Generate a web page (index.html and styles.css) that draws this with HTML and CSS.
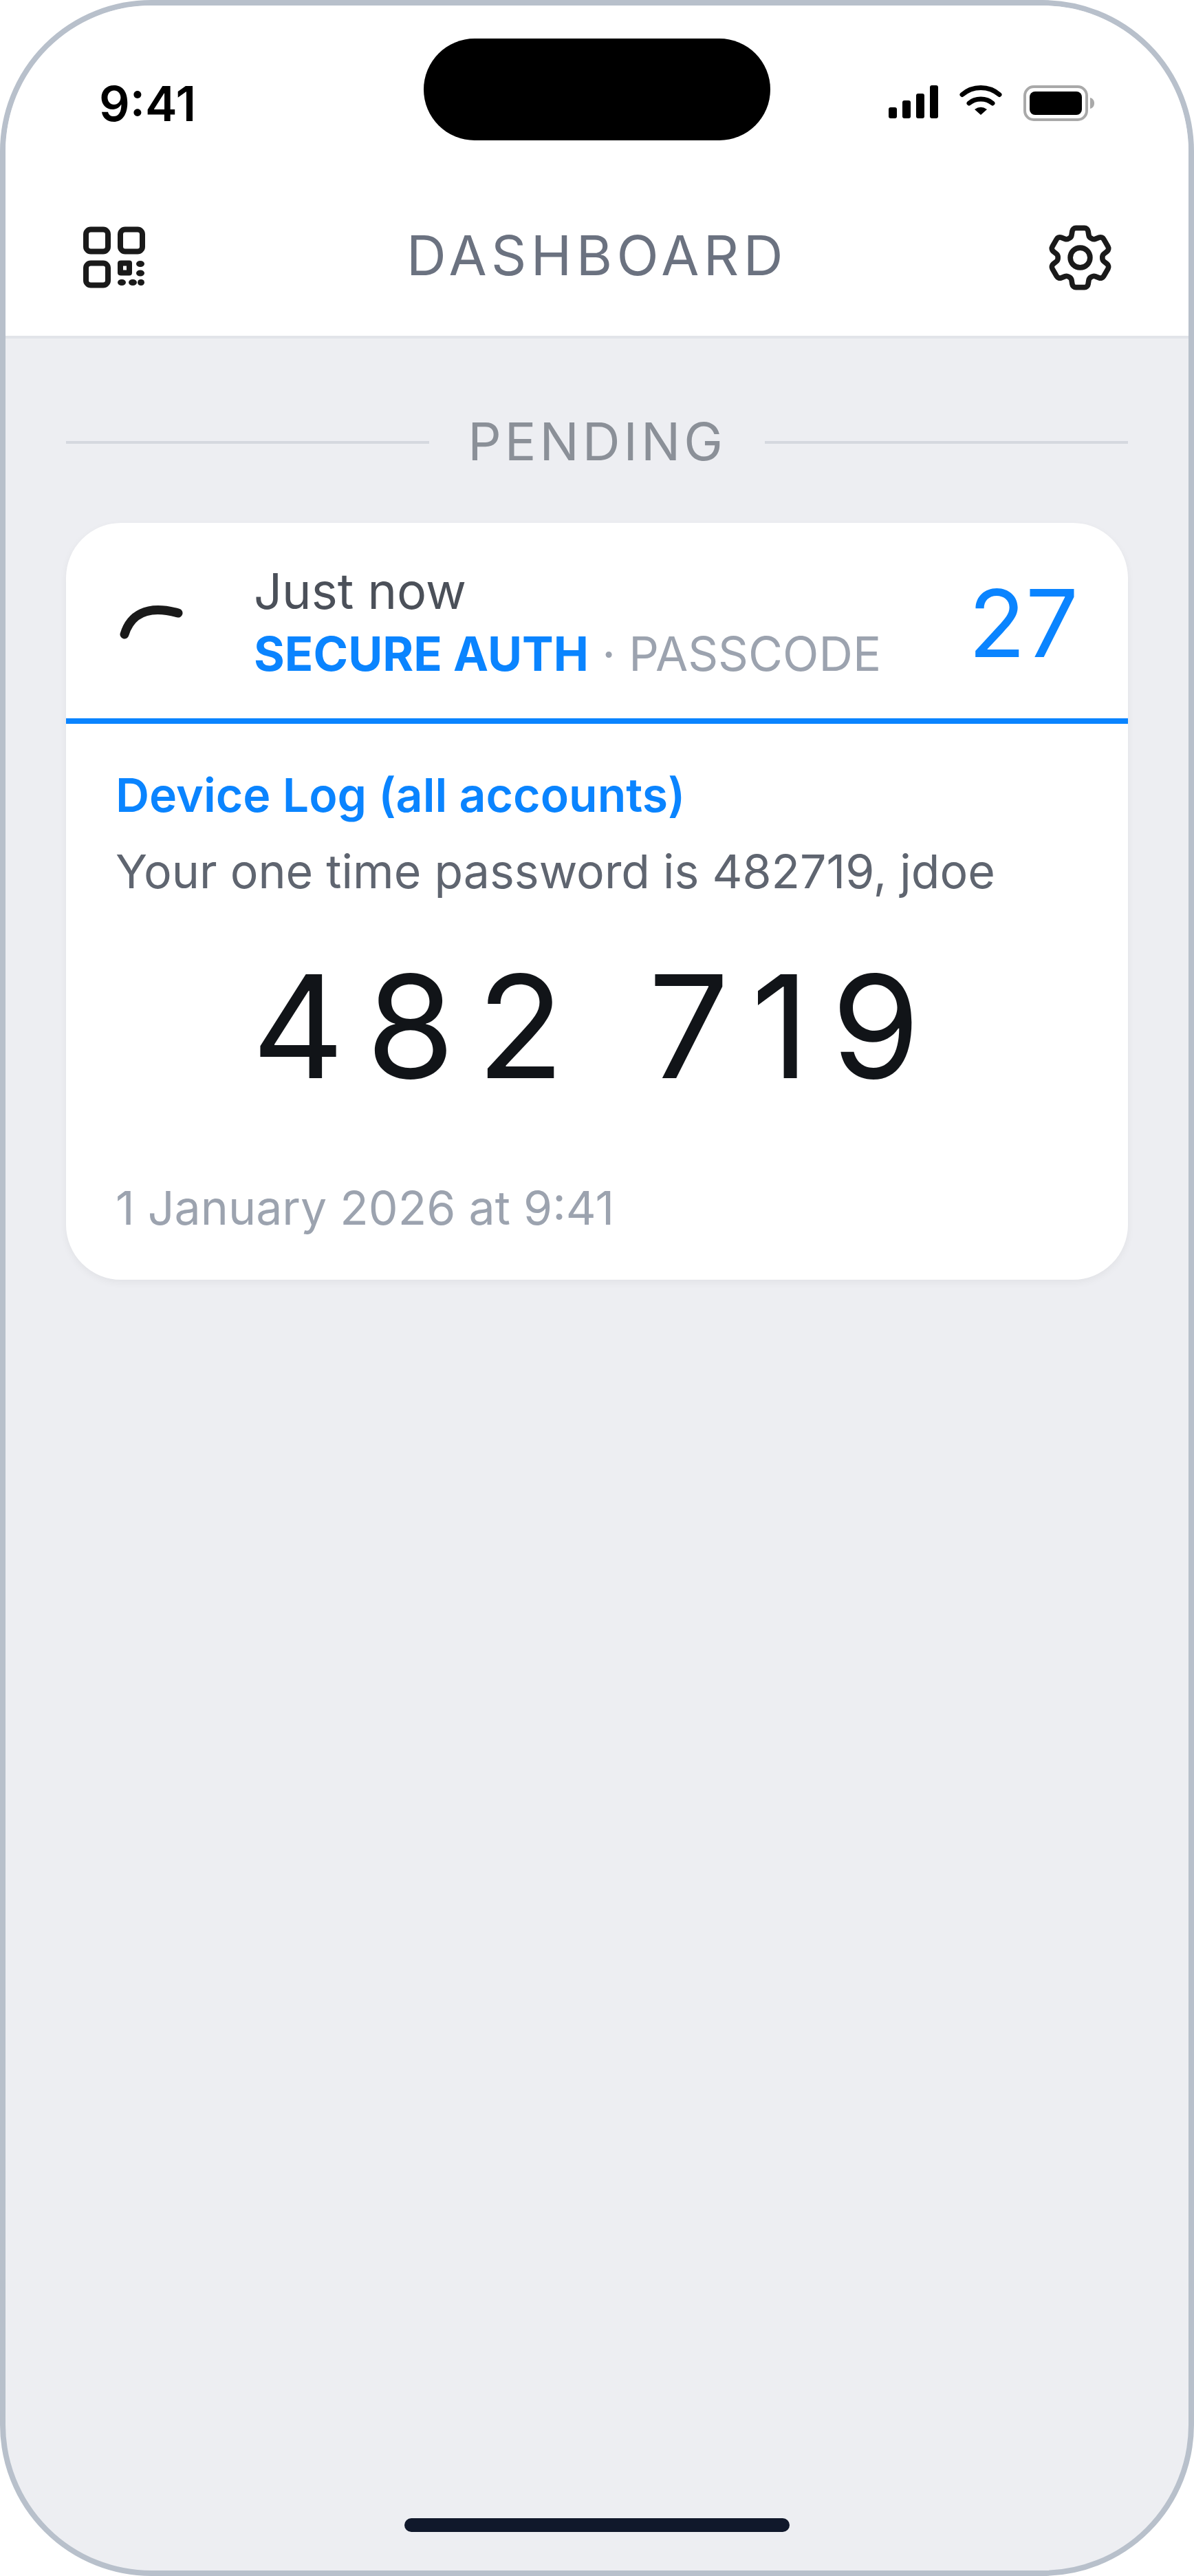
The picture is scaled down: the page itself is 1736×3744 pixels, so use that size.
FILE: index.html
```html
<!DOCTYPE html>
<html lang="en">
<head>
  <meta charset="UTF-8" />
  <title>Dashboard</title>
  <link rel="stylesheet" href="styles.css">
</head>
<body>
  <div class="phone">
    <header class="top">
      <div class="status-bar">
        <span class="clock">9:41</span>
        <div class="island"></div>
        <div class="status-icons">
          <svg class="signal" width="72" height="48" viewBox="0 0 72 48" fill="#000">
            <rect x="0" y="32" width="12" height="16" rx="3"/>
            <rect x="20" y="22" width="12" height="26" rx="3"/>
            <rect x="40" y="12" width="12" height="36" rx="3"/>
            <rect x="60" y="0" width="12" height="48" rx="3"/>
          </svg>
          <svg class="wifi" width="62" height="44" viewBox="0 0 62 44" fill="none" stroke="#000" stroke-width="7" stroke-linecap="round">
            <path d="M4 14.5C19 1 43 1 58 14.5"/>
            <path d="M14 27C23 19 39 19 48 27"/>
            <path d="M22 36Q31 29.500 40 36L31 44Z" fill="#000" stroke="none"/>
          </svg>
          <svg class="battery" width="104" height="52" viewBox="0 0 104 52">
            <rect x="2" y="2" width="90" height="48" rx="13" fill="none" stroke="#a9a9a9" stroke-width="4"/>
            <rect x="9" y="9" width="76" height="34" rx="8" fill="#000"/>
            <path d="M97 18C101 19 103 22 103 26C103 30 101 33 97 34Z" fill="#a9a9a9"/>
          </svg>
        </div>
      </div>
      <nav class="nav">
        <svg class="nav-icon" viewBox="-13 -12.500 115 115" fill="#1a1a1a">
          <g fill="none" stroke="#1a1a1a" stroke-width="8">
            <rect x="4" y="4" width="32" height="32" rx="7"/>
            <rect x="54" y="4" width="32" height="32" rx="7"/>
            <rect x="4" y="53" width="32" height="32" rx="7"/>
          </g>
          <path fill-rule="evenodd" d="M55 49H67Q71 49 71 53V67Q71 71 67 71H55Q50 71 50 67V53Q50 49 55 49ZM58 57V63H63V57Z"/>
          <ellipse cx="83" cy="54" rx="6" ry="4.500"/>
          <ellipse cx="83" cy="67.500" rx="6" ry="4.500"/>
          <ellipse cx="56" cy="81" rx="6" ry="4.500"/>
          <ellipse cx="72" cy="81" rx="6" ry="4.500"/>
          <ellipse cx="84" cy="81" rx="5" ry="4.500"/>
        </svg>
        <h1 class="nav-title">DASHBOARD</h1>
        <svg class="nav-icon" viewBox="0 0 24 24" fill="none" stroke="#1a1a1a" stroke-width="1.600" stroke-linejoin="round">
          <path d="M9.594 3.94c.09-.542.56-.94 1.11-.94h2.593c.55 0 1.02.398 1.11.94l.213 1.281c.063.374.313.686.645.87.074.04.147.083.22.127.325.196.72.257 1.075.124l1.217-.456a1.125 1.125 0 0 1 1.37.49l1.296 2.247a1.125 1.125 0 0 1-.26 1.431l-1.003.827c-.293.241-.438.613-.43.992a7.723 7.723 0 0 1 0 .255c-.008.378.137.75.43.991l1.004.827c.424.35.534.955.26 1.43l-1.298 2.247a1.125 1.125 0 0 1-1.369.491l-1.217-.456c-.355-.133-.75-.072-1.076.124a6.470 6.470 0 0 1-.22.128c-.331.183-.581.495-.644.869l-.213 1.281c-.09.543-.56.94-1.11.94h-2.594c-.55 0-1.019-.398-1.11-.94l-.213-1.281c-.062-.374-.312-.686-.644-.87a6.520 6.520 0 0 1-.22-.127c-.325-.196-.72-.257-1.076-.124l-1.217.456a1.125 1.125 0 0 1-1.369-.49l-1.297-2.247a1.125 1.125 0 0 1 .26-1.431l1.004-.827c.292-.24.437-.613.43-.991a6.932 6.932 0 0 1 0-.255c.007-.38-.138-.751-.43-.992l-1.004-.827a1.125 1.125 0 0 1-.26-1.43l1.297-2.247a1.125 1.125 0 0 1 1.37-.491l1.216.456c.356.133.751.072 1.076-.124.072-.044.146-.086.22-.128.332-.183.582-.495.644-.869l.214-1.28Z"/>
          <circle cx="12" cy="12" r="3"/>
        </svg>
      </nav>
    </header>

    <main class="content">
      <div class="section-label">
        <span class="section-rule"></span>
        <span class="section-text">PENDING</span>
        <span class="section-rule"></span>
      </div>

      <section class="card">
        <div class="card-head">
          <svg class="spinner" width="96" height="56" viewBox="0 0 96 56" fill="none" stroke="#1a1a1a" stroke-width="13" stroke-linecap="round">
            <path d="M7 47C15 20 38 3 85 16"/>
          </svg>
          <div class="card-meta">
            <div class="card-time">Just now</div>
            <div class="card-source"><strong>SECURE AUTH</strong> · PASSCODE</div>
          </div>
          <div class="card-count">27</div>
        </div>
        <div class="card-body">
          <div class="card-title">Device Log (all accounts)</div>
          <div class="card-message">Your one time password is 482719, jdoe</div>
          <div class="card-code">482 719</div>
          <div class="card-date">1 January 2026 at 9:41</div>
        </div>
      </section>
    </main>

    <div class="home-bar"></div>
  </div>
</body>
</html>
```
FILE: styles.css
```css
* {
  box-sizing: border-box;
}

body {
  margin: 0;
  background: #fff;
  font-family: 'Inter', 'Liberation Sans', sans-serif;
}

.phone {
  width: 1736px;
  height: 3744px;
  display: flex;
  flex-direction: column;
  background: #edeef2;
  border: 8px solid #b8c0cb;
  border-radius: 220px;
  overflow: hidden;
}

/* Barra de estado + nav */
.top {
  background: #fff;
  border-bottom: 4px solid #e2e4e9;
  height: 484px;
}

.status-bar {
  display: grid;
  grid-template-columns: 1fr 504px 1fr;
  padding-top: 48px;
  height: 196px;
}
.clock {
  padding: 54px 0 0 136px;
  font-size: 70px;
  line-height: 82px;
  font-weight: 600;
  color: #000;
}
.island {
  height: 148px;
  background: #000;
  border-radius: 74px;
}
.status-icons {
  display: flex;
  align-items: flex-start;
  padding: 68px 0 0 172px;
}
.signal { margin-top: 0; }
.wifi { margin: -1px 0 0 31px; }
.battery { margin: 0 0 0 31px; }

.nav {
  display: grid;
  grid-template-columns: 1fr auto 1fr;
  align-items: center;
  padding: 113px 100px 0;
}
.nav-icon {
  width: 115px;
  height: 115px;
}
.nav-icon:last-child {
  justify-self: end;
}
.nav-title {
  margin: 0 0 8px;
  font-size: 80px;
  line-height: 96px;
  font-weight: 400;
  letter-spacing: 6.4px;
  color: #6b7280;
}

.content {
  flex: 1;
  padding: 0 88px;
}

.section-label {
  display: flex;
  align-items: center;
  gap: 56px;
  height: 268px;
  padding-top: 30px;
}
.section-rule {
  flex: 1;
  height: 4px;
  margin-top: 4px;
  background: #d5d8df;
}
.section-text {
  font-size: 76px;
  letter-spacing: 5px;
  color: #8b9098;
}

.card {
  background: #fff;
  border-radius: 80px;
  overflow: hidden;
  box-shadow: 0 4px 12px rgba(0,0,0,0.05);
  height: 1100px;
}

.card-head {
  display: flex;
  align-items: center;
  height: 292px;
  padding: 0 72px 8px 78px;
  border-bottom: 8px solid #0a84ff;
}
.spinner {
  margin-top: 10px;
  flex: none;
}
.card-meta {
  flex: 1;
  margin: 13px 0 0 99px;
}
.card-time {
  font-size: 72px;
  line-height: 92px;
  color: #4b5059;
}
.card-source {
  font-size: 68.5px;
  line-height: 92px;
  color: #9ca3af;
}
.card-source strong {
  font-weight: 700;
  color: #0a84ff;
}
.card-count {
  margin-top: 16px;
  font-size: 136px;
  line-height: 160px;
  font-weight: 400;
  color: #0a84ff;
}

.card-body {
  padding: 58px 72px 0;
}
.card-title {
  font-size: 68px;
  line-height: 90px;
  font-weight: 600;
  color: #0a84ff;
}
.card-message {
  margin-top: 21px;
  font-size: 68px;
  line-height: 90px;
  color: #5f6570;
}
.card-code {
  margin-top: 55px;
  font-size: 208px;
  line-height: 250px;
  letter-spacing: 32px;
  text-align: center;
  color: #111418;
}
.card-date {
  margin-top: 94px;
  font-size: 68px;
  line-height: 90px;
  color: #9ca3af;
}

.home-bar {
  flex: none;
  align-self: center;
  width: 560px;
  height: 20px;
  margin-bottom: 56px;
  background: #10182b;
  border-radius: 10px;
}
```
